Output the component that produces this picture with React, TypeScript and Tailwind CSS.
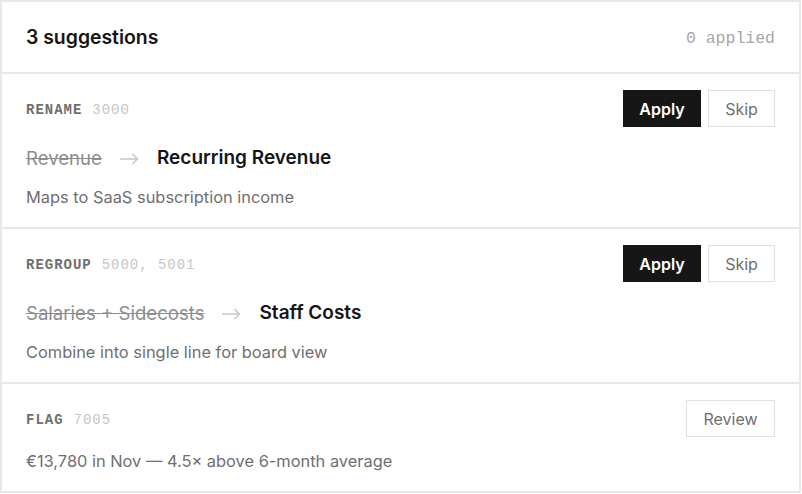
import React from 'react';

const SANS = { fontFamily: 'Inter, "Noto Sans", sans-serif' };

type Suggestion = {
  kind: string;
  accounts: string;
  from?: string;
  to?: string;
  note: string;
  action: 'apply' | 'review';
};

const SUGGESTIONS: Suggestion[] = [
  { kind: 'RENAME', accounts: '3000', from: 'Revenue', to: 'Recurring Revenue', note: 'Maps to SaaS subscription income', action: 'apply' },
  { kind: 'REGROUP', accounts: '5000, 5001', from: 'Salaries + Sidecosts', to: 'Staff Costs', note: 'Combine into single line for board view', action: 'apply' },
  { kind: 'FLAG', accounts: '7005', note: '€13,780 in Nov — 4.5× above 6-month average', action: 'review' },
];

function Row({ s, last }: { s: Suggestion; last: boolean }) {
  return (
    <div className={`px-6 pt-4 pb-[18px] ${last ? '' : 'border-b-2 border-[#e8e8e8]'}`}>
      <div className="flex items-center justify-between h-[37px]">
        <div className="mt-[4px] font-['Liberation_Mono','DejaVu_Sans_Mono',monospace] text-[14px] tracking-[0.07em]">
          <span className="font-bold text-[#6f6f6f]">{s.kind}</span>
          <span className="ml-[10px] text-[#c6c6c6]">{s.accounts}</span>
        </div>
        <div className="flex gap-[7px]">
          {s.action === 'apply' ? (
            <>
              <button className="h-[37px] w-[78px] bg-[#161616] text-white text-[16px] font-semibold">Apply</button>
              <button className="h-[37px] w-[67px] border border-[#e0e0e0] text-[#6f6f6f] text-[16px]">Skip</button>
            </>
          ) : (
            <button className="h-[37px] w-[89px] border border-[#e0e0e0] text-[#6f6f6f] text-[16px]">Review</button>
          )}
        </div>
      </div>
      {s.from && (
        <div className="flex items-center mt-[18px] h-[27px]">
          <span className="line-through text-[18.6px] text-[#8d8d8d]">{s.from}</span>
          <svg className="mx-[18px]" width="19" height="12" viewBox="0 0 19 12" fill="none" stroke="#c6c6c6" strokeWidth="1.5">
            <path d="M0 6h17.5M12.5 1l5 5-5 5" />
          </svg>
          <span className="font-semibold text-[19px] text-[#161616]">{s.to}</span>
        </div>
      )}
      <p className={`${s.from ? 'mt-[13px]' : 'mt-[12px]'} leading-6 text-[16.4px] text-[#6f6f6f]`}>{s.note}</p>
    </div>
  );
}

export default function App() {
  return (
    <div className="w-[802px] h-[494px] bg-white" style={SANS}>
      <div className="w-[801px] h-[493px] border-2 border-[#e8e8e8] flex flex-col">
        <div className="h-[72px] shrink-0 flex items-center justify-between px-6 border-b-2 border-[#e8e8e8]">
          <h1 className="mt-[2px] text-[19.4px] font-semibold text-[#161616]">3 suggestions</h1>
          <span className="mt-1 font-['Liberation_Mono','DejaVu_Sans_Mono',monospace] text-[16.5px] text-[#a8a8a8]">0 applied</span>
        </div>
        {SUGGESTIONS.map((s, i) => (
          <Row key={s.kind} s={s} last={i === SUGGESTIONS.length - 1} />
        ))}
      </div>
    </div>
  );
}
